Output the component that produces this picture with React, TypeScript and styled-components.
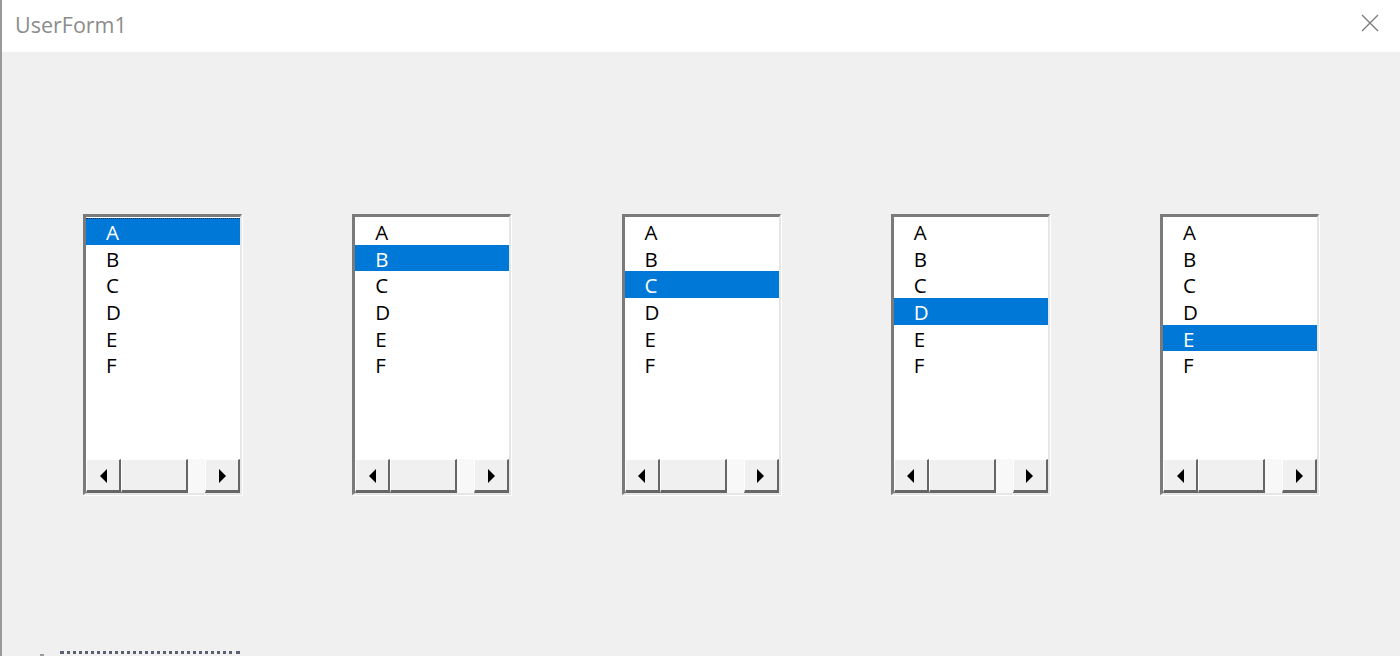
import { createGlobalStyle, styled } from "styled-components";

const GlobalStyle = createGlobalStyle`
  html, body {
    margin: 0;
    padding: 0;
    background: #f0f0f0;
  }
  body {
    font-family: "Segoe UI", "Open Sans", "Noto Sans", sans-serif;
  }
`;

const lists = [0, 1, 2, 3, 4];
const items = ["A", "B", "C", "D", "E", "F"];

const App = () => {
  return (
    <>
      <GlobalStyle />
      <Window>
        <TitleBar>
          <Title>UserForm1</Title>
          <CloseButton>
            <svg width="18" height="18" viewBox="0 0 18 18">
              <path d="M1 1 L17 17 M17 1 L1 17" stroke="#7a7a7a" strokeWidth="1.3" fill="none" />
            </svg>
          </CloseButton>
        </TitleBar>
        <FormBody>
          <ListRow>
            {lists.map((selected) => (
              <ListBox key={selected}>
                <Items>
                  {items.map((label, i) => (
                    <Item key={label} $selected={i === selected} $focused={i === selected && selected === 0}>
                      {label}
                    </Item>
                  ))}
                </Items>
                <ScrollBar>
                  <ScrollButton>
                    <Arrow $dir="left" />
                  </ScrollButton>
                  <Thumb />
                  <Track />
                  <ScrollButton>
                    <Arrow $dir="right" />
                  </ScrollButton>
                </ScrollBar>
              </ListBox>
            ))}
          </ListRow>
          <Footer>
            <FooterMark />
            <FooterDots />
          </Footer>
        </FormBody>
      </Window>
    </>
  );
};

const Window = styled.div`
  display: flex;
  flex-direction: column;
  width: 1400px;
  height: 656px;
  box-sizing: border-box;
  border-left: 2px solid #9a9a9a;
  overflow: hidden;
`;

const TitleBar = styled.div`
  display: flex;
  align-items: center;
  justify-content: space-between;
  height: 52px;
  flex-shrink: 0;
  background: #ffffff;
  padding: 0 21px 4px 13px;
  box-sizing: border-box;
`;

const Title = styled.div`
  font-size: 21.5px;
  color: #8c8c8c;
`;

const CloseButton = styled.div`
  display: flex;
  align-items: center;
  justify-content: center;
  width: 18px;
  height: 18px;
  margin-bottom: 2px;
`;

const FormBody = styled.div`
  flex: 1;
  display: flex;
  flex-direction: column;
  background: #f0f0f0;
`;

const ListRow = styled.div`
  display: flex;
  gap: 110.25px;
  padding: 162px 0 0 81px;
`;

const ListBox = styled.div`
  display: flex;
  flex-direction: column;
  width: 159px;
  height: 281px;
  box-sizing: border-box;
  background: #ffffff;
  border-style: solid;
  border-width: 3px 2px 2px 3px;
  border-color: #7a7a7a #e6e6e6 #e6e6e6 #7a7a7a;
  box-shadow: 1px 1px 0 #ffffff;
`;

const Items = styled.div`
  flex: 1;
  display: flex;
  flex-direction: column;
  padding-top: 1px;
`;

const Item = styled.div<{ $selected: boolean; $focused: boolean }>`
  height: 26.7px;
  padding-left: 20px;
  padding-top: ${(p) => (p.$focused ? "1px" : "2px")};
  font-size: 20.5px;
  line-height: 24.7px;
  box-sizing: border-box;
  color: ${(p) => (p.$selected ? "#ffffff" : "#000000")};
  background: ${(p) => (p.$selected ? "#0078d7" : "transparent")};
  border-top: ${(p) => (p.$focused ? "1px dotted #1a2a44" : "none")};
`;

const ScrollBar = styled.div`
  display: flex;
  height: 34px;
  flex-shrink: 0;
  background: #f7f7f7;
`;

const ScrollButton = styled.div`
  display: flex;
  align-items: center;
  justify-content: center;
  width: 35px;
  box-sizing: border-box;
  background: #f0f0f0;
  border-style: solid;
  border-width: 1px 2px 3px 1px;
  border-color: #ffffff #666666 #666666 #ffffff;
`;

const Thumb = styled.div`
  width: 67px;
  box-sizing: border-box;
  background: #f0f0f0;
  border-style: solid;
  border-width: 1px 2px 3px 1px;
  border-color: #ffffff #666666 #666666 #ffffff;
`;

const Track = styled.div`
  flex: 1;
  background: #f8f8f8;
`;

const Arrow = styled.div<{ $dir: "left" | "right" }>`
  width: 0;
  height: 0;
  margin-top: 2px;
  border-top: 7px solid transparent;
  border-bottom: 7px solid transparent;
  border-left: ${(p) => (p.$dir === "right" ? "7px solid #000" : "none")};
  border-right: ${(p) => (p.$dir === "left" ? "7px solid #000" : "none")};
`;

const Footer = styled.div`
  margin-top: auto;
  display: flex;
  align-items: flex-end;
  gap: 16px;
  height: 5px;
  padding-left: 38px;
`;

const FooterMark = styled.div`
  width: 4px;
  height: 2px;
  background: #9a9a9a;
`;

const FooterDots = styled.div`
  width: 180px;
  height: 2px;
  border-top: 3px dotted #5a6070;
`;

export default App;
